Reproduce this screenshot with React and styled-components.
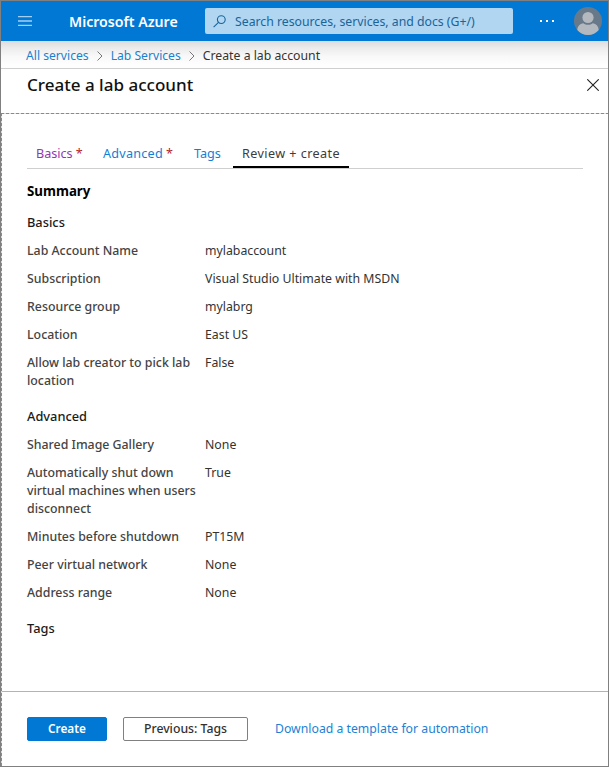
import React from 'react';
import styled, { createGlobalStyle } from 'styled-components';

const GlobalStyle = createGlobalStyle`
  * { box-sizing: border-box; }
  body {
    margin: 0;
    background: #fff;
    font-family: "Noto Sans", "Open Sans", sans-serif;
    font-size: 12.3px;
    line-height: 18px;
    color: #323130;
  }
`;

const Frame = styled.div`
  display: flex;
  flex-direction: column;
  width: 609px;
  height: 767px;
  border: 1px solid #808080;
  background: #fff;
  overflow: hidden;
  white-space: nowrap;
`;

const TopBar = styled.header`
  display: flex;
  align-items: center;
  flex: none;
  height: 40px;
  padding: 0 6px 0 17px;
  background: #0078d4;
`;

const MenuIcon = styled.svg`
  width: 14px;
  height: 10px;
`;

const Brand = styled.div`
  width: 136px;
  margin-left: 37px;
  padding-top: 2px;
  color: #fff;
  font-size: 14.15px;
  font-weight: 600;
`;

const SearchBox = styled.div`
  display: flex;
  align-items: center;
  width: 308px;
  height: 26px;
  padding-left: 8px;
  border-radius: 2px;
  background: #b0d6f2;
  color: #1b6496;
  font-size: 12.25px;
`;

const SearchText = styled.span`
  padding-top: 2px;
`;

const SearchIcon = styled.svg`
  width: 13px;
  height: 13px;
  margin-right: 9px;
`;

const MoreIcon = styled.svg`
  width: 15px;
  height: 2px;
  margin-left: 27px;
`;

const Avatar = styled.svg`
  width: 28px;
  height: 28px;
  margin-left: auto;
`;

const Breadcrumb = styled.nav`
  display: flex;
  align-items: center;
  flex: none;
  height: 28px;
  padding: 3px 0 0 25px;
  border-bottom: 1px solid #cfcfcf;
  background: linear-gradient(#dcdcdc 0, #ececec 7px, #f8f8f8 15px, #fefefe 24px);
  font-size: 12.15px;
`;

const Crumb = styled.span`
  color: ${(p) => (p.$current ? '#333' : '#1a80cf')};
  font-size: ${(p) => (p.$current ? 12.25 : 12.15)}px;
`;

const CrumbArrow = styled.svg`
  width: 6px;
  height: 10px;
  margin: 0 8px;
`;

const Blade = styled.main`
  display: flex;
  flex-direction: column;
  flex: 1;
`;

const TitleBar = styled.div`
  display: flex;
  align-items: center;
  justify-content: space-between;
  height: 44px;
  padding: 0 9px 13px 26px;
`;

const Title = styled.h1`
  margin: 0;
  color: #111;
  font-size: 17.05px;
  font-weight: 500;
`;

const CloseIcon = styled.svg`
  width: 12px;
  height: 12px;
`;

const Body = styled.div`
  display: flex;
  flex-direction: column;
  flex: 1;
  background:
    repeating-linear-gradient(90deg, #12b5e5 0 3px, #d4dcdf 3px 5px) 0 0 / 100% 1px no-repeat,
    repeating-linear-gradient(#12b5e5 0 3px, #d4dcdf 3px 5px) 0 0 / 1px 100% no-repeat;
`;

const Tabs = styled.div`
  display: flex;
  height: 56px;
  margin: 0 25px 0 26px;
  padding-top: 29px;
  border-bottom: 1px solid #cfcfcf;
`;

const tones = { visited: '#9238ae', link: '#0f80d6', active: '#3c3c3c' };

const Tab = styled.div`
  width: ${(p) => p.$width}px;
  height: 26px;
  padding: 3px 0 0 9px;
  border-bottom: ${(p) => (p.$tone === 'active' ? '2px solid #000' : 'none')};
  color: ${(p) => tones[p.$tone]};
  font-size: 12.6px;
  letter-spacing: ${(p) => p.$spacing}px;
`;

const Required = styled.span`
  margin-left: 3px;
  color: #b4232f;
`;

const Summary = styled.section`
  display: flex;
  flex-direction: column;
  flex: 1;
  padding: 13px 26px 0;
`;

const SummaryTitle = styled.h2`
  margin: 0 0 13px;
  color: #000;
  font-size: 13.3px;
  font-weight: 700;
  line-height: 18px;
`;

const Group = styled.div`
  display: flex;
  flex-direction: column;
  gap: 10px;
  margin-bottom: 18px;
`;

const GroupTitle = styled.h3`
  margin: 0;
  color: #1b1b1b;
  font-size: 12.8px;
  font-weight: 500;
`;

const Field = styled.div`
  display: grid;
  grid-template-columns: 170px 1fr;
  column-gap: 8px;
`;

const Label = styled.div`
  margin: 1px 0 -1px;
  color: #444;
  font-size: 12.35px;
  font-weight: 500;
  white-space: pre-line;
`;

const Value = styled.div`
  margin: 1px 0 -1px;
  color: #333;
  font-size: 12.3px;
`;

const Footer = styled.footer`
  display: flex;
  align-items: center;
  height: 75px;
  margin-left: 1px;
  padding-left: 25px;
  border-top: 1px solid #b3b3b3;
`;

const Button = styled.button`
  width: ${(p) => (p.$primary ? 80 : 125)}px;
  height: 24px;
  margin: 0 16px 0 0;
  padding: 0 0 ${(p) => (p.$primary ? 2 : 0)}px;
  border: 1px solid ${(p) => (p.$primary ? '#0078d4' : '#808080')};
  border-radius: 2px;
  background: ${(p) => (p.$primary ? '#0078d4' : '#fff')};
  color: ${(p) => (p.$primary ? '#fff' : '#323130')};
  font-family: inherit;
  font-size: ${(p) => (p.$primary ? 11.8 : 12.25)}px;
  font-weight: ${(p) => (p.$primary ? 600 : 500)};
  line-height: 20px;
`;

const TemplateLink = styled.a`
  margin-left: 11px;
  color: #1a82d4;
  font-size: 12.25px;
`;

const groups = [
  {
    title: 'Basics',
    fields: [
      ['Lab Account Name', 'mylabaccount'],
      ['Subscription', 'Visual Studio Ultimate with MSDN'],
      ['Resource group', 'mylabrg'],
      ['Location', 'East US'],
      ['Allow lab creator to pick lab location', 'False'],
    ],
  },
  {
    title: 'Advanced',
    fields: [
      ['Shared Image Gallery', 'None'],
      ['Automatically shut down\nvirtual machines when users\ndisconnect', 'True'],
      ['Minutes before shutdown', 'PT15M'],
      ['Peer virtual network', 'None'],
      ['Address range', 'None'],
    ],
  },
  { title: 'Tags', fields: [] },
];

function Chevron() {
  return (
    <CrumbArrow viewBox="0 0 6 10" fill="none" stroke="#777" strokeWidth="1">
      <path d="M0.5 0.5 5 5 0.5 9.5" />
    </CrumbArrow>
  );
}

export default function App() {
  return (
    <>
      <GlobalStyle />
      <Frame>
        <TopBar>
          <MenuIcon viewBox="0 0 14 10" stroke="#a5cff0" strokeWidth="1.3">
            <path d="M0 .5h14M0 5h14M0 9.5h14" />
          </MenuIcon>
          <Brand>Microsoft Azure</Brand>
          <SearchBox>
            <SearchIcon viewBox="0 0 13 13" fill="none" stroke="#17649a" strokeWidth="1.1">
              <circle cx="8.3" cy="4.6" r="3.9" />
              <path d="M5.5 7.4 .6 12.2" />
            </SearchIcon>
            <SearchText>Search resources, services, and docs (G+/)</SearchText>
          </SearchBox>
          <MoreIcon viewBox="0 0 15 2" fill="#fff">
            <path d="M0 0h2v2H0zM6 0h2v2h-2zM12 0h2v2h-2z" />
          </MoreIcon>
          <Avatar viewBox="0 0 28 28">
            <circle cx="14" cy="14" r="14" fill="#68798a" />
            <circle cx="14" cy="10.5" r="5.6" fill="#b3b9be" />
            <path
              d="M3.3 23C3.6 18.8 6 16.6 9.3 16.2c2.8 2.1 6.6 2.1 9.4 0 3.3.4 5.7 2.6 6 6.8A14 14 0 0 1 3.3 23z"
              fill="#b3b9be"
            />
          </Avatar>
        </TopBar>
        <Breadcrumb>
          <Crumb>All services</Crumb>
          <Chevron />
          <Crumb>Lab Services</Crumb>
          <Chevron />
          <Crumb $current>Create a lab account</Crumb>
        </Breadcrumb>
        <Blade>
          <TitleBar>
            <Title>Create a lab account</Title>
            <CloseIcon viewBox="0 0 12 12" stroke="#222" strokeWidth="1.1">
              <path d="M.3.3 11.7 11.7M11.7.3.3 11.7" />
            </CloseIcon>
          </TitleBar>
          <Body>
            <Tabs>
              <Tab $tone="visited" $width={67} $spacing={0}>
                Basics<Required>*</Required>
              </Tab>
              <Tab $tone="link" $width={91} $spacing={0.25}>
                Advanced<Required>*</Required>
              </Tab>
              <Tab $tone="link" $width={48} $spacing={0}>Tags</Tab>
              <Tab $tone="active" $width={116} $spacing={0.43}>Review + create</Tab>
            </Tabs>
            <Summary>
              <SummaryTitle>Summary</SummaryTitle>
              {groups.map((group) => (
                <Group key={group.title}>
                  <GroupTitle>{group.title}</GroupTitle>
                  {group.fields.map(([label, value]) => (
                    <Field key={label}>
                      <Label>{label}</Label>
                      <Value>{value}</Value>
                    </Field>
                  ))}
                </Group>
              ))}
            </Summary>
            <Footer>
              <Button $primary>Create</Button>
              <Button>Previous: Tags</Button>
              <TemplateLink>Download a template for automation</TemplateLink>
            </Footer>
          </Body>
        </Blade>
      </Frame>
    </>
  );
}
